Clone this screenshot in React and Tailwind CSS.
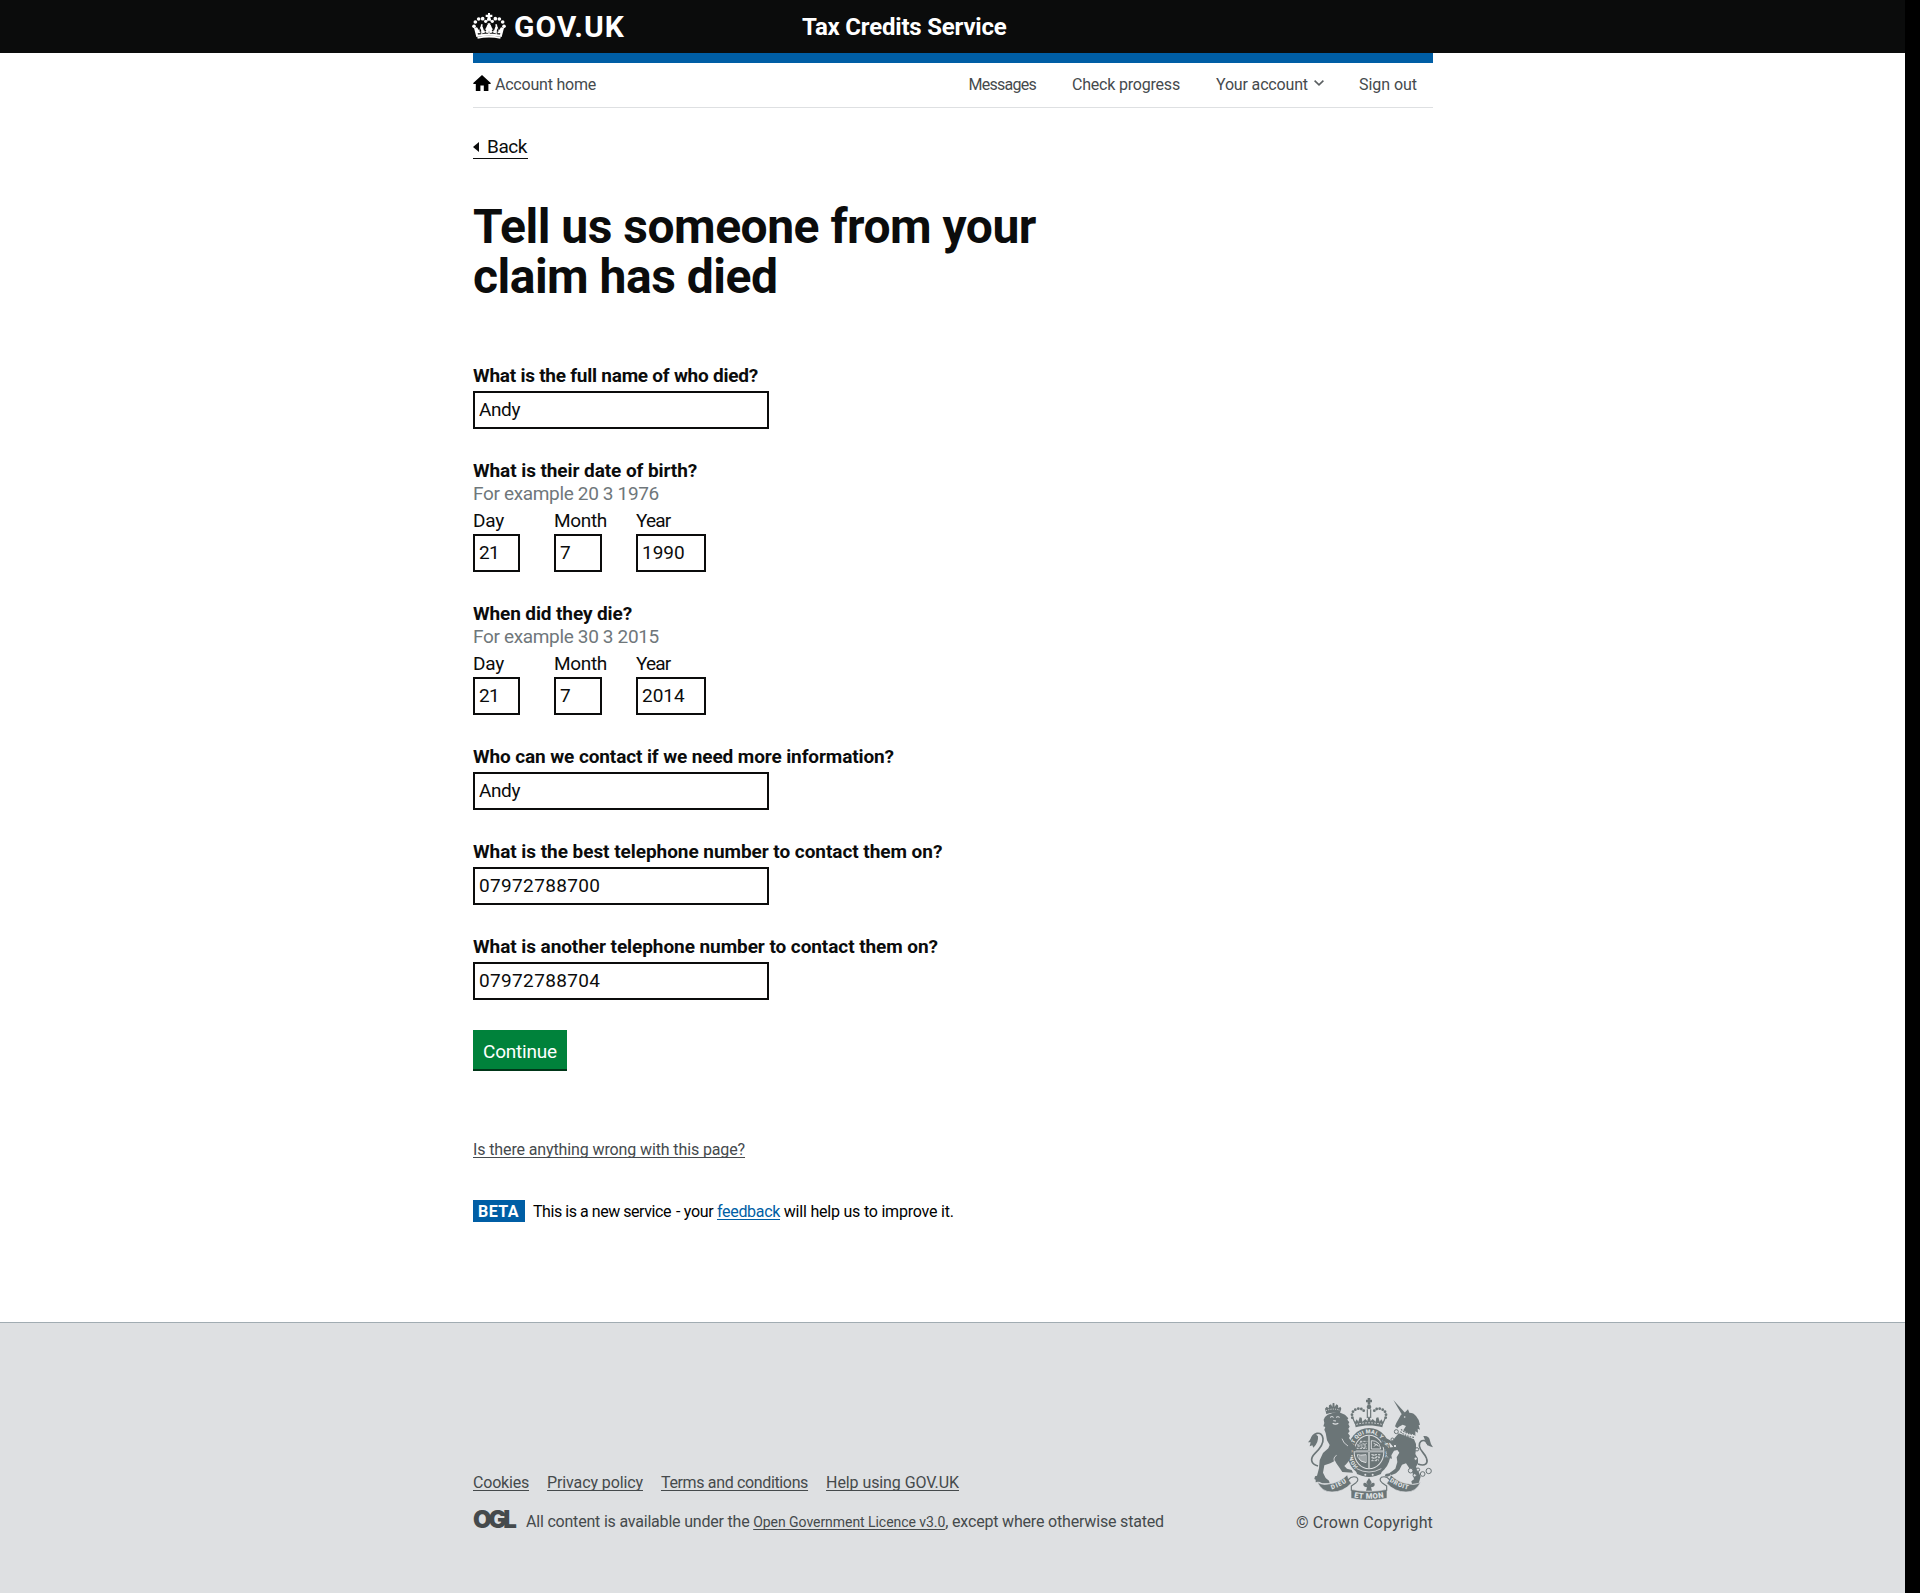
import React from "react";

const link = "underline decoration-1 underline-offset-2 [text-decoration-skip-ink:none]";

function CrownLogo() {
  return (
    <svg className="-ml-px mb-0.5 h-[26px] w-[34px] shrink-0" viewBox="0 0 102 78" fill="#fff">
      <path d="M13 72 6 45l9-2 7 10 3-12h7l4 12 6-8 4-9h10l4 9 6 8 4-12h7l3 12 7-10 9 2-7 27c-25-5-51-5-76 0z" />
      <path d="M17 77c22-5 46-5 68 0l1-6c-23-4-47-4-70 0z" />
      <circle cx="6" cy="40" r="5.5" />
      <circle cx="10" cy="27" r="5.5" />
      <circle cx="20" cy="18" r="5.5" />
      <circle cx="32" cy="17" r="5.5" />
      <circle cx="41" cy="25" r="5" />
      <circle cx="61" cy="25" r="5" />
      <circle cx="70" cy="17" r="5.5" />
      <circle cx="82" cy="18" r="5.5" />
      <circle cx="92" cy="27" r="5.5" />
      <circle cx="96" cy="40" r="5.5" />
      <path d="M48 0h6v5h7v7h-6l3 11h-14l3-11h-6V5h7zM27 34h5l-1 8h-5zM70 34h5l1 8h-5zM47 31h8v8h-8z" />
      <g fill="#0b0c0c">
        <path d="M17 60h7l3-6 4 6h6l3-5 4 5h3l4-8 4 8h3l4-5 3 5h6l4-6 3 6h7l-1 5c-22-4-44-4-66 0z" opacity=".8" />
        <path d="M24 45l5 10-6 2zM78 45l-5 10 6 2zM38 46l5 8-6 1zM64 46l-5 8 6 1z" />
      </g>
      <path d="M28 52h3v14h-3zM71 52h3v14h-3zM49 46h4v18h-4z" />
    </svg>
  );
}

function HomeIcon() {
  return (
    <svg className="mb-[3px] mr-1 h-4 w-[18px]" viewBox="0 0 18 16" fill="#000">
      <path d="M9 0 18 8.2 17.2 9H15.4V16H10.8V10.6H7.4V16H2.8V9H.8L0 8.2z" />
    </svg>
  );
}

const BEADS = [[217, 113], [216, 104], [219, 95], [226, 89], [235, 86], [244, 87], [251, 92]];

function RoyalArms() {
  const c = "#6b7577";
  const bg = "#dee0e2";
  return (
    <svg className="h-[102px] w-[125px]" viewBox="84 54 375 306" fill={c} stroke="none">
      {/* central crown */}
      <path d="M263 54h8v5h5v8h-5v7h-8v-7h-5v-8h5z" />
      <circle cx="267" cy="81" r="7" />
      {BEADS.map(([x, y]) => (
        <React.Fragment key={x + "-" + y}>
          <circle cx={x} cy={y} r="4.2" />
          <circle cx={534 - x} cy={y} r="4.2" />
        </React.Fragment>
      ))}
      <path d="M218 113q4 10 9 20M316 113q-4 10-9 20M262 88v26M272 88v26" fill="none" stroke={c} strokeWidth="3.5" />
      <path d="M224 128l6-10 5 7 4-13 6 1 2 12 9-8 6 6 3-13h4l3 13 6-6 9 8 2-12 6-1 4 13 5-7 6 10-3 14c-26-7-54-7-80 0z" />
      <path d="M229 133c25-6 51-6 76 0" fill="none" stroke={bg} strokeWidth="2.5" strokeDasharray="5 4" />

      {/* garter */}
      <ellipse cx="267" cy="217" rx="65" ry="73" />
      <ellipse cx="267" cy="216" rx="46" ry="52" fill={bg} />
      <defs>
        <path id="garter" d="M234 260a50 57 0 1 1 66 0" />
        <path id="dieu" d="M152 329Q180 322 206 302" />
        <path id="mon" d="M214 351Q267 362 320 351" />
        <path id="droit" d="M325 302Q352 322 388 330" />
      </defs>
      <text fill={bg} fontFamily="Roboto, sans-serif" fontWeight="900" fontSize="16.5" letterSpacing="0.4">
        <textPath href="#garter">HONI SOIT QUI MAL Y PENSE</textPath>
      </text>

      {/* shield */}
      <ellipse cx="267" cy="216" rx="43" ry="49" />
      <path d="M267 168v96M225 214h84" stroke={bg} strokeWidth="5" />
      <path d="M267 168v96M225 214h84" stroke={c} strokeWidth="1.5" />
      <g fill="none" stroke={bg} strokeWidth="2.8">
        <path d="M240 184h22M231 195h30M229 205h32M238 190q6-4 10 0t12 0M233 200q6-4 10 0t16 0" strokeDasharray="7 3" />
        <path d="M274 207V182q12-2 24 10l4 15zM282 200q8-12 13-1M281 190l12 6" />
        <path d="M232 224q8 3 26 0v24q-18-2-24-16zM240 226v14M246 225v20M252 225v22" />
        <path d="M274 224h28M274 233h26M274 242h22M277 228q6-4 10 0t12 0M277 237q6-4 10 0t10 0" strokeDasharray="7 3" />
      </g>
      <path d="M226 262q41 26 82 0l-5 20q-36 18-72 0z" />
      <path d="M230 266q37 20 74 0" fill="none" stroke={bg} strokeWidth="2.5" />
      <circle cx="256" cy="284" r="3" fill={bg} />
      <circle cx="278" cy="284" r="3" fill={bg} />

      {/* lion */}
      <path d="M139 102 135 86l5-6 6 5 1-9 6-3 4 8 1-12h5l1 12 5-8 5 3 1 9 6-5 3 6-5 15q-18-6-39 1z" />
      <path d="M138 92q20-9 42-1" fill="none" stroke={bg} strokeWidth="3" strokeDasharray="3 4" />
      <path d="M143 104q18-8 38-6l14 6 10 11-3 4 6 8-3 5 4 8-4 6 4 8-5 6 6 8-3 6 10 16 8 8 6 10-6 6-10-4 0 14-8 18-8 10-6 6 8 8 14 4 4 8-32-2-8-12-10-14-4-8-14 8-18 6-4 22 8 16 10 8 2 8-22 0-10-5-10 2 0-8-4-2 2-8 6-2 6-22 2-24 10-22 16-14 4-10-8-14-4-22-4-10 3-8-6-2 3-10-2-10 4-8z" />
      <path d="M150 112q6-5 11 0M168 112q6-4 11 0M160 122l8 1" stroke={bg} strokeWidth="3" fill="none" />
      <path d="M158 130q8 5 17 0" stroke={bg} strokeWidth="3.5" fill="none" />
      <path d="M170 226q-12 6-6 20M186 176q4 14 18 22" stroke={bg} strokeWidth="2.5" fill="none" />
      <path d="M114 258c-22-6-25-22-9-38 14-13 26-26 24-44q-2-18-18-16-14 4-18 20" fill="none" stroke={c} strokeWidth="5" />
      <path d="M106 162q-10 10-22 25l8 0-3 12 8-3 3 7q16-14 14-34z" />

      {/* unicorn */}
      <path d="M340 60 375 98l-9 6z" />
      <path d="M363 104l12-7 9-9 4 10q13 0 20 10l8 12 4 14-4 2 4 13-7-3 1 12-8-4 0 14-38-14 10-16-10-4-11 6-5 5-7-6 4-10z" />
      <circle cx="374" cy="111" r="2.5" fill={bg} />
      <path d="M362 151q20 18 42 17" fill="none" stroke={bg} strokeWidth="11" />
      <path d="M363 148q18 16 42 15M361 155q18 16 42 17" fill="none" stroke={c} strokeWidth="3.5" strokeDasharray="5 3" />
      <path d="M356 160l12 4 34 14 6 14 0 18-2 12 8 14 0 14-6 10 8 16 6 14-6 20-20 2-2-8 8-6-4-18-12-18-8-12-12 4-8 16-10 10-26 10-8-1 3-7 11-2 18-14 6-20-2-14 8-14-6-8-10 2-8 14 2 10-10-2-6-8 0-10-8-14-12-4-2-8 8-3 10 8 10 8 14-2-10-12-16-4-8-1 4-8 12 0 14 8z" />
      <path d="M414 252c22 8 30-2 26-16-4-16-20-22-22-38-1-14 8-18 16-16 6 2 10 8 10 14" fill="none" stroke={c} strokeWidth="5" />
      <path d="M430 168q18-2 20 14 2 12 9 20-22-4-24-22z" />
      <g fill={bg} stroke={c} strokeWidth="3">
        <circle cx="349" cy="155" r="6" />
        <circle cx="337" cy="178" r="4" />
        <circle cx="345" cy="198" r="5" />
        <circle cx="411" cy="208" r="5" />
        <circle cx="407" cy="236" r="5" />
        <circle cx="392" cy="272" r="7" />
        <circle cx="404" cy="286" r="5" />
        <circle cx="414" cy="269" r="5" />
        <circle cx="428" cy="282" r="7" />
        <circle cx="446" cy="273" r="8" />
      </g>

      {/* scroll */}
      <g stroke={bg} strokeWidth="2">
        <path d="M112 306q12 10 34 6 34-4 56-28 2 16 12 26-24 26-58 26-32 0-44-30z" />
        <path d="M422 306q-12 10-34 6-34-4-56-28-2 16-12 26 24 26 58 26 32 0 44-30z" />
        <path d="M213 328q54 12 108 0v27q-54 12-108 0z" />
      </g>
      <path d="M204 300q12-14 26-8 8 8-2 16l-14 10v14M330 300q-12-14-26-8-8 8 2 16l14 10v14" fill="none" stroke={c} strokeWidth="3.5" />
      <g fill={bg} fontFamily="Roboto, sans-serif" fontWeight="900" textAnchor="middle">
        <text fontSize="19" letterSpacing="3"><textPath href="#dieu" startOffset="50%">DIEU</textPath></text>
        <text fontSize="23" letterSpacing="1"><textPath href="#mon" startOffset="50%">ET MON</textPath></text>
        <text fontSize="19" letterSpacing="1.5"><textPath href="#droit" startOffset="50%">DROIT</textPath></text>
      </g>
      <path d="M267 294l8 13-5 9q4-10 13-7 4 9-6 12l-4 1 3 10h-18l3-10-4-1q-10-3-6-12 9-3 13 7l-5-9z" />
    </svg>
  );
}

function Label({ children, className }) {
  return <label className={`block whitespace-nowrap text-[19px] leading-[23px] font-bold ${className}`}>{children}</label>;
}

function Box({ value, className }) {
  return (
    <input
      readOnly
      value={value}
      className={`block h-[38px] border-2 border-[#0b0c0c] bg-white px-1 pb-0.5 text-[19px] text-[#0b0c0c] outline-none ${className}`}
    />
  );
}

function DateRow({ year }) {
  return (
    <div className="mt-1 flex text-[19px] leading-[23px]">
      <div className="w-[81px]">
        <span className="tracking-[-0.22px]">Day</span>
        <Box value="21" className="mt-0.5 w-[47px] tracking-[-0.8px]" />
      </div>
      <div className="w-[82px]">
        <span className="tracking-[-0.32px]">Month</span>
        <Box value="7" className="mt-0.5 w-12" />
      </div>
      <div>
        <span className="tracking-[-0.79px]">Year</span>
        <Box value={year} className="mt-0.5 w-[70px]" />
      </div>
    </div>
  );
}

export default function App() {
  return (
    <div className="flex h-[1593px] w-[1920px] bg-black font-[Roboto,sans-serif] text-[#0b0c0c]">
      <div className="flex w-[1905px] flex-col bg-white">
        <header className="h-[53px] bg-[#0b0c0c] text-white">
          <div className="ml-[473px] flex h-full w-[960px] items-center font-bold">
            <div className="flex w-[329px] items-center">
              <CrownLogo />
              <span className="ml-2 text-[30px] leading-[53px] tracking-[1px]">GOV.UK</span>
            </div>
            <span className="pt-px text-2xl leading-[53px] tracking-[-0.2px]">Tax Credits Service</span>
          </div>
        </header>

        <div className="ml-[473px] w-[960px]">
          <nav className="flex h-[55px] items-center border-b border-t-10 border-b-[#dee0e2] border-t-[#005ea5] pb-px text-base leading-5 text-[#454a4d]">
            <HomeIcon />
            <a className="tracking-[-0.22px]">Account home</a>
            <a className="ml-auto tracking-[-0.74px]">Messages</a>
            <a className="ml-9 tracking-[-0.2px]">Check progress</a>
            <a className="ml-9 tracking-[-0.16px]">Your account</a>
            <svg className="mb-[3px] ml-1.5 h-1.5 w-2.5" viewBox="0 0 10 6" fill="none" stroke="#5a5f61" strokeWidth="1.6">
              <path d="M.6.6 5 4.8 9.4.6" />
            </svg>
            <a className="ml-[35px] mr-4 tracking-[-0.04px]">Sign out</a>
          </nav>

          <main>
            <a className="mt-[27px] flex h-6 w-[55px] items-center border-b border-[#0b0c0c] text-[19px] leading-[23px] tracking-[-0.44px]">
              <svg className="mr-2 h-2.5 w-1.5" viewBox="0 0 6 10">
                <path d="M6 0v10L0 5z" fill="#0b0c0c" />
              </svg>
              Back
            </a>
            <h1 className="mt-[43px] w-[630px] text-5xl leading-[50px] font-bold tracking-[-0.5px]">
              Tell us someone from your
              <br />
              claim has died
            </h1>

            <form className="mt-[62px]">
              <Label className="tracking-[-0.24px]">What is the full name of who died?</Label>
              <Box value="Andy" className="mt-1 w-[296px] tracking-[-0.4px]" />

              <Label className="mt-[30px] tracking-[-0.08px]">What is their date of birth?</Label>
              <p className="text-[19px] leading-[23px] tracking-[-0.34px] text-[#6f777b]">For example 20 3 1976</p>
              <DateRow year="1990" />

              <Label className="mt-[30px] tracking-[-0.11px]">When did they die?</Label>
              <p className="text-[19px] leading-[23px] tracking-[-0.34px] text-[#6f777b]">For example 30 3 2015</p>
              <DateRow year="2014" />

              <Label className="mt-[30px] tracking-[-0.11px]">Who can we contact if we need more information?</Label>
              <Box value="Andy" className="mt-1 w-[296px] tracking-[-0.4px]" />
              <Label className="mt-[30px] tracking-[-0.05px]">What is the best telephone number to contact them on?</Label>
              <Box value="07972788700" className="mt-1 w-[296px] tracking-[0.35px]" />
              <Label className="mt-[30px] tracking-[-0.07px]">What is another telephone number to contact them on?</Label>
              <Box value="07972788704" className="mt-1 w-[296px] tracking-[0.35px]" />

              <button
                type="button"
                className="mt-[30px] block h-[39px] w-[94px] bg-[#00823b] pt-1 text-[19px] leading-[35px] tracking-[-0.2px] text-white shadow-[0_2px_0_#003618]"
              >
                Continue
              </button>
            </form>

            <p className="mt-[71px] text-base leading-5 tracking-[-0.12px] text-[#454a4d]">
              <a className={link}>Is there anything wrong with this page?</a>
            </p>
            <p className="mt-10 flex h-[22px] whitespace-pre text-base leading-6 text-black">
              <strong className="mr-2 w-[52px] bg-[#005ea5] pl-[5px] tracking-[0.45px] text-white">BETA</strong>
              <span className="tracking-[-0.45px]">This is a new service</span>
              <span className="ml-[5px] tracking-[-0.3px]">- your </span>
              <a className={`tracking-[-0.32px] text-[#005ea5] ${link}`}>feedback</a>
              <span className="tracking-[-0.21px]"> will help us to improve it.</span>
            </p>
          </main>
        </div>

        <footer className="mt-[100px] flex-1 border-t border-[#a1acb2] bg-[#dee0e2] pb-[61px] text-base leading-5 text-[#454a4c]">
          <div className="ml-[473px] flex h-full w-[960px] items-end justify-between">
            <div>
              <div className="flex gap-[18px]">
                <a className={`tracking-[-0.2px] ${link}`}>Cookies</a>
                <a className={`tracking-[-0.11px] ${link}`}>Privacy policy</a>
                <a className={`tracking-[-0.35px] ${link}`}>Terms and conditions</a>
                <a className={`tracking-[-0.08px] ${link}`}>Help using GOV.UK</a>
              </div>
              <div className="mt-[19px] flex whitespace-pre">
                <span className="w-[53px] font-[Inter,sans-serif] text-2xl leading-4 font-black tracking-[-3.2px]">OGL</span>
                <p>
                  <span className="tracking-[-0.2px]">All content is available under the </span>
                  <a className={`text-sm leading-5 tracking-[-0.05px] ${link}`}>Open Government Licence v3.0</a>
                  <span className="tracking-[-0.18px]">, except where otherwise stated</span>
                </p>
              </div>
            </div>
            <div className="flex flex-col items-end">
              <RoyalArms />
              <span className="mt-[13px] -mb-px tracking-[0.15px]">© Crown Copyright</span>
            </div>
          </div>
        </footer>
      </div>
    </div>
  );
}
